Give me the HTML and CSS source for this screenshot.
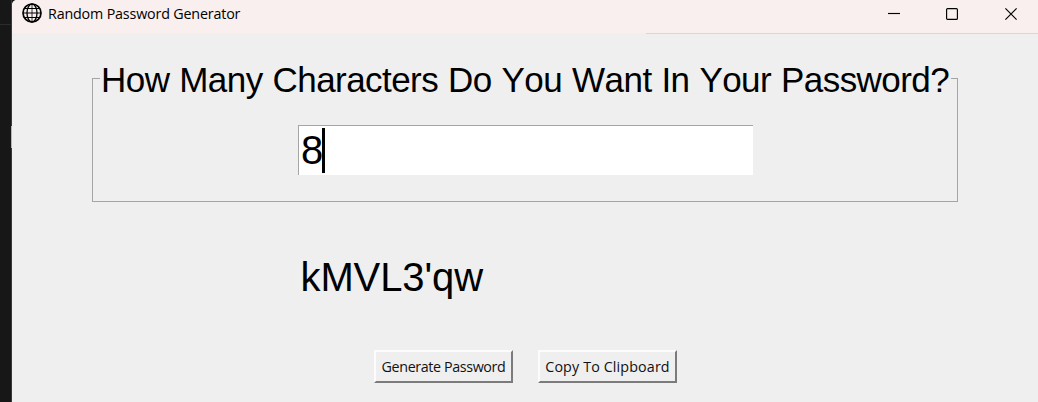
FILE: index.html
```
<!DOCTYPE html>
<html lang="en">
<head>
<meta charset="utf-8">
<title>Random Password Generator</title>
<link rel="stylesheet" href="styles.css">
</head>
<body>
<div class="desktop">
  <div class="backdrop"><span class="backdrop-line"></span><span class="backdrop-edge"></span></div>
  <main class="window">
    <header class="titlebar">
      <svg class="globe" viewBox="0 0 20 20" fill="none" stroke="#000">
        <circle cx="10" cy="10" r="9" stroke-width="1.7"/>
        <ellipse cx="10" cy="10" rx="5" ry="9" stroke-width="1.3"/>
        <path d="M10 1v18" stroke-width=".8"/>
        <path d="M1 10h18M3 5.5h14M3 14.5h14" stroke-width="1.1"/>
      </svg>
      <span class="title">Random Password Generator</span>
      <div class="controls">
        <svg viewBox="0 0 12 12"><path d="M1 5.5h12"/></svg>
        <svg viewBox="0 0 12 12"><rect x=".6" y=".6" width="10.8" height="10.8" rx="1"/></svg>
        <svg viewBox="0 0 12 12"><path d="M.4.4l11.2 11.2M11.6.4L.4 11.6"/></svg>
      </div>
    </header>
    <section class="content">
      <fieldset class="frame">
        <legend class="legend">How Many Characters Do You Want In Your Password?</legend>
        <div class="entry"><span class="value">8</span><span class="caret"></span></div>
      </fieldset>
      <div class="result">kMVL3'qw</div>
      <div class="actions">
        <button class="button generate">Generate Password</button>
        <button class="button copy">Copy To Clipboard</button>
      </div>
    </section>
  </main>
</div>
</body>
</html>
```
FILE: styles.css
```
* { box-sizing: border-box; }
body { margin: 0; overflow: hidden; background: #171717; }
.desktop { display: flex; width: 1038px; height: 402px; }
.backdrop {
  display: flex; flex-direction: column; align-items: flex-end;
  width: 12px; background: #171717; border-right: 1px solid #39393b;
}
.backdrop-line { width: 11px; height: 25px; border-bottom: 1px solid #2c2c2c; }
.backdrop-edge { width: 1px; height: 22px; margin: 101px -1px 0 0; background: #b5b5b5; }
.window {
  flex: 1; display: flex; flex-direction: column;
  background: #efefef; border-top-left-radius: 5px; overflow: hidden;
}
.titlebar {
  display: flex; align-items: center; height: 34px; padding: 0 21px 6px 10px;
  background: linear-gradient(90deg, #efefef 634px, #d6d6d8 634px) bottom / 100% 1px no-repeat, #f9efee;
}
.globe { width: 20px; height: 20px; margin-top: -2px; }
.title {
  margin-left: 6px; font: 14.3px/20px "Open Sans", "Noto Sans", sans-serif;
  letter-spacing: -.17px; color: #000; white-space: nowrap;
}
.controls { display: flex; gap: 47px; margin-left: auto; }
.controls svg { display: block; width: 12px; height: 12px; overflow: visible; fill: none; stroke: #000; stroke-width: 1.15; }
.content { display: flex; flex-direction: column; }
.frame {
  width: 866px; height: 144px; margin: 24px 0 0 80px; padding: 0 0 0 7px;
  border: 1px solid #a5a5a5; min-width: 0;
}
.legend {
  width: 851px; height: 40px; padding: 2px 0 0 1px; white-space: nowrap;
  font: 35px/40px "Liberation Sans", Arial, sans-serif; font-kerning: none;
  letter-spacing: -.55px; word-spacing: .7px; color: #000;
}
.entry {
  display: flex; align-items: center; width: 455px; height: 50px;
  margin: 27px 0 0 198px; padding-left: 2px; background: #fff;
  border-top: 1px solid #a5a5a5; border-left: 1px solid #a5a5a5;
}
.value, .result { font: 40px/46px "Liberation Sans", Arial, sans-serif; color: #000; }
.value { margin-top: -1px; }
.caret { width: 3px; height: 45px; margin-left: -1px; background: #000; }
.result { margin: 52px 0 0 288.5px; height: 50px; white-space: nowrap; letter-spacing: -.1px; }
.actions { display: flex; gap: 25px; margin: 46px 0 0 362px; }
.button {
  width: 139px; height: 33px; padding: 0; white-space: nowrap;
  border: 2px solid; border-color: #fcfcfc #7b7b7b #7b7b7b #fcfcfc;
  background: #efefef; color: #111; font: 14.3px/20px "Open Sans", sans-serif;
}
.generate { letter-spacing: -.38px; }
.copy { letter-spacing: .13px; }
```
